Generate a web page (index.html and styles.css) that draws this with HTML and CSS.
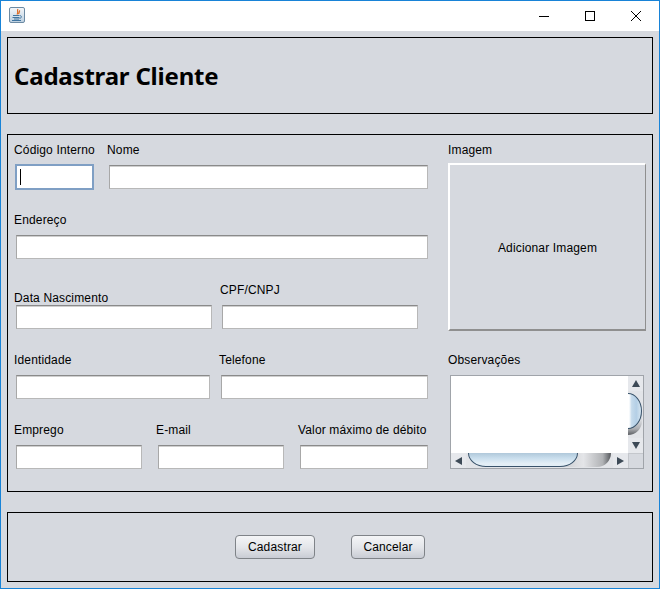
FILE: index.html
```html
<!DOCTYPE html>
<html lang="pt">
<head>
<meta charset="utf-8">
<title>Cadastrar Cliente</title>
<link rel="stylesheet" href="styles.css">
</head>
<body>
<div class="window">
  <header class="titlebar">
    <svg class="app-icon" width="16" height="16" viewBox="0 0 16 16">
      <defs><linearGradient id="ig" x1="0" y1="0" x2="0" y2="1"><stop offset="0" stop-color="#f4f7fa"/><stop offset="1" stop-color="#bccfdf"/></linearGradient></defs>
      <rect x="0.5" y="0.5" width="15" height="15" rx="1.5" fill="url(#ig)" stroke="#6c8aa3"/>
      <path d="M9 2C7.500 4 10 5 8 7.500M11 3.500C9.500 4.500 11 5.500 9.500 7" fill="none" stroke="#dc6a22" stroke-width="1.200"/>
      <path d="M4 8.500h6M3.500 10.500h7M5 12h5M3 13.500h9" stroke="#3f74a0" stroke-width="1" fill="none"/>
      <path d="M10.500 8.500c2.500 0 2.500 2.500 0 3" stroke="#3f74a0" fill="none"/>
    </svg>
    <div class="window-controls">
      <svg class="control" width="46" height="30" viewBox="0 0 46 30"><path d="M18 15.500h10" stroke="#000" fill="none"/></svg>
      <svg class="control" width="46" height="30" viewBox="0 0 46 30"><rect x="18.500" y="10.500" width="9" height="9" stroke="#000" fill="none"/></svg>
      <svg class="control" width="46" height="30" viewBox="0 0 46 30"><path d="M18 10l10 10M28 10l-10 10" stroke="#000" fill="none"/></svg>
    </div>
  </header>
  <main class="content">
    <section class="panel panel-title"><h1>Cadastrar Cliente</h1></section>
    <section class="panel panel-form">
      <div class="left">
        <div class="row row-1">
          <div class="field f-code"><label>Código Interno</label><div class="input focus"><span class="caret"></span></div></div>
          <div class="field f-name"><label>Nome</label><div class="input"></div></div>
        </div>
        <div class="row row-2">
          <div class="field f-full"><label>Endereço</label><div class="input"></div></div>
        </div>
        <div class="row row-3">
          <div class="field f-birth"><label>Data Nascimento</label><div class="input"></div></div>
          <div class="field f-cpf"><label>CPF/CNPJ</label><div class="input"></div></div>
        </div>
        <div class="row row-4">
          <div class="field f-id"><label>Identidade</label><div class="input"></div></div>
          <div class="field f-phone"><label>Telefone</label><div class="input"></div></div>
        </div>
        <div class="row row-5">
          <div class="field f-job"><label>Emprego</label><div class="input"></div></div>
          <div class="field f-mail"><label>E-mail</label><div class="input"></div></div>
          <div class="field f-debt"><label>Valor máximo de débito</label><div class="input"></div></div>
        </div>
      </div>
      <div class="right">
        <label class="label-image">Imagem</label>
        <button class="image-button" type="button">Adicionar Imagem</button>
        <label class="label-notes">Observações</label>
        <div class="scrollpane">
          <div class="textarea"></div>
          <div class="vbar">
            <span class="arrow up"></span>
            <div class="vtrack"><div class="vshadow"></div><div class="vthumb"></div></div>
            <span class="arrow down"></span>
          </div>
          <div class="hbar">
            <span class="arrow left-a"></span>
            <div class="htrack"><div class="hshadow"></div><div class="hthumb"></div></div>
            <span class="arrow right-a"></span>
          </div>
          <div class="corner"></div>
        </div>
      </div>
    </section>
    <section class="panel panel-actions">
      <button class="btn btn-save" type="button">Cadastrar</button>
      <button class="btn btn-cancel" type="button">Cancelar</button>
    </section>
  </main>
</div>
</body>
</html>
```
FILE: styles.css
```css
* { box-sizing: border-box; }
html, body { margin: 0; padding: 0; }
body { width: 660px; height: 589px; overflow: hidden; font: 12px "Liberation Sans", Arial, sans-serif; letter-spacing: 0.15px; color: #000; }
.window { width: 660px; height: 589px; border: 1px solid #1883d7; display: flex; flex-direction: column; background: #d6d9df; }
.titlebar { height: 30px; background: #fff; display: flex; align-items: center; justify-content: space-between; padding-left: 8px; flex: none; }
.app-icon { display: block; margin-top: -2px; }
.window-controls { display: flex; }
.control { display: block; }
.content { flex: 1; padding: 6px 6px 7px; display: flex; flex-direction: column; }
.panel { border: 1px solid #000; }
.panel-title { height: 77px; display: flex; align-items: center; padding-left: 6px; }
h1 { margin: 0; font: bold 24px "Noto Sans", Tahoma, sans-serif; letter-spacing: -0.2px; }
.panel-form { height: 358px; margin-top: 20px; display: flex; padding: 0 6px; }
.left { width: 420px; }
.row { display: flex; }
.field { display: flex; flex-direction: column; }
.field label { height: 14px; line-height: 14px; white-space: nowrap; }
.input { height: 24px; margin: 8px 0 0 2px; background: #fff; border: 1px solid #b8b8b8; border-top-color: #8a8a8a; border-left-color: #a8a8a8; box-shadow: inset 0 1px #cfcfcf; }
.input.focus { height: 26px; width: 79px; margin: 7px 0 0 1px; border: 2px solid #7f9fc4; box-shadow: none; }
.caret { display: block; width: 1px; height: 16px; background: #000; margin: 3px 0 0 3px; }
.row-1 { padding-top: 8px; height: 78px; }
.f-code { width: 93px; }
.f-name { width: 321px; }
.f-full { width: 414px; }
.row-2, .row-3, .row-4 { height: 70px; }
.f-birth { width: 206px; padding-top: 8px; }
.f-birth .input { margin-top: 0; width: 196px; }
.f-cpf { width: 198px; }
.f-id { width: 205px; }
.f-id .input { width: 194px; }
.f-phone { width: 209px; }
.f-job { width: 142px; }
.f-mail { width: 142px; }
.f-job .input, .f-mail .input { width: 126px; }
.f-debt { width: 130px; }
.right { width: 198px; margin-left: 14px; display: flex; flex-direction: column; }
.label-image { height: 14px; line-height: 14px; margin-top: 8px; }
.image-button { width: 198px; height: 168px; margin-top: 6px; padding: 2px 0 0; background: #d6d9df; font: 12px "Liberation Sans", Arial, sans-serif; letter-spacing: 0.15px; color: #000; border: 2px solid #fff; border-right-color: #8f8f8f; border-bottom-color: #8f8f8f; border-right-width: 1px; }
.label-notes { height: 14px; line-height: 14px; margin-top: 22px; }
.scrollpane { width: 194px; height: 94px; margin: 8px 0 0 2px; display: grid; grid-template-columns: 177px 15px; grid-template-rows: 77px 15px; border: 1px solid #a0a4aa; background: #d6d9df; }
.textarea { background: #fff; }
.vbar { display: flex; flex-direction: column; background: #d9dce1; }
.hbar { display: flex; background: #d9dce1; }
.corner { background: #d6d9df; border-left: 1px solid #c4c7cc; border-top: 1px solid #c4c7cc; }
.arrow { flex: none; display: flex; align-items: center; justify-content: center; width: 15px; height: 15px; background: #e6e8ec; }
.arrow::before { content: ""; display: block; border-style: solid; border-color: transparent; }
.up::before { border-width: 0 4px 7px; border-bottom-color: #3d4a57; }
.down::before { border-width: 7px 4px 0; border-top-color: #3d4a57; }
.left-a::before { border-width: 4px 7px 4px 0; border-right-color: #3d4a57; }
.right-a::before { border-width: 4px 0 4px 7px; border-left-color: #3d4a57; }
.vtrack, .htrack { flex: 1; overflow: hidden; position: relative; background: #e2e4e8; }
.vthumb, .hthumb { position: absolute; border: 1px solid #39536b; }
.vthumb { left: -14px; top: 2px; width: 28px; height: 36px; border-radius: 0 14px 14px 0 / 0 18px 18px 0; background: linear-gradient(90deg, #fff 54%, #c6dbec 64%, #b4cfe6 82%, #d4e4f0); }
.vshadow { position: absolute; left: -14px; top: 20px; width: 28px; height: 24px; border-radius: 0 0 14px 0; background: linear-gradient(#d8dade 40%, #aaacb0 75%, #5c5f63); }
.hthumb { left: 2px; top: -14px; width: 110px; height: 28px; border-radius: 0 0 18px 18px / 0 0 14px 14px; background: linear-gradient(#b0c8da 50%, #c9deed 70%, #e3eef6 90%); }
.hshadow { position: absolute; left: 90px; top: -14px; width: 55px; height: 28px; border-radius: 0 0 14px 0; background: linear-gradient(90deg, #c4c6ca, #e4e5e8 50%, #b0b2b5 85%, #55585c); }
.panel-actions { height: 70px; margin-top: 20px; display: flex; align-items: center; padding-left: 227px; }
.btn { height: 24px; padding: 0; background: linear-gradient(#f4f5f7, #e4e6ea 50%, #c9ccd4); border: 1px solid #7f8388; border-radius: 4px; font: 12px "Liberation Sans", Arial, sans-serif; letter-spacing: 0.15px; color: #000; }
.btn-save { width: 80px; }
.btn-cancel { width: 74px; margin-left: 36px; }
```
